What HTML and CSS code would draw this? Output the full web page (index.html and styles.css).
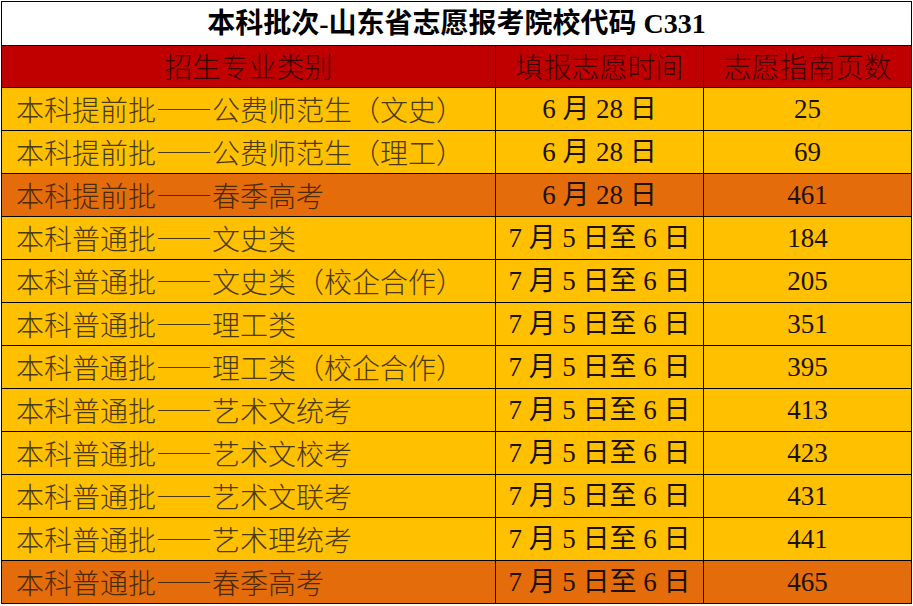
FILE: index.html
```html
<!DOCTYPE html>
<html lang="zh-CN">
<head>
<meta charset="utf-8">
<title>本科批次-山东省志愿报考院校代码 C331</title>
<link rel="stylesheet" href="styles.css">
</head>
<body>
<table class="sheet">
  <colgroup>
    <col class="c1"><col class="c2"><col class="c3">
  </colgroup>
  <tr class="title-row"><td colspan="3">本科批次-山东省志愿报考院校代码 C331</td></tr>
  <tr class="head-row"><td>招生专业类别</td><td>填报志愿时间</td><td>志愿指南页数</td></tr>
  <tr class="row y"><td class="name">本科提前批——公费师范生（文史）</td><td class="date">6 月 28 日</td><td class="num">25</td></tr>
  <tr class="row y"><td class="name">本科提前批——公费师范生（理工）</td><td class="date">6 月 28 日</td><td class="num">69</td></tr>
  <tr class="row o"><td class="name">本科提前批——春季高考</td><td class="date">6 月 28 日</td><td class="num">461</td></tr>
  <tr class="row y"><td class="name">本科普通批——文史类</td><td class="date">7 月 5 日至 6 日</td><td class="num">184</td></tr>
  <tr class="row y"><td class="name">本科普通批——文史类（校企合作）</td><td class="date">7 月 5 日至 6 日</td><td class="num">205</td></tr>
  <tr class="row y"><td class="name">本科普通批——理工类</td><td class="date">7 月 5 日至 6 日</td><td class="num">351</td></tr>
  <tr class="row y"><td class="name">本科普通批——理工类（校企合作）</td><td class="date">7 月 5 日至 6 日</td><td class="num">395</td></tr>
  <tr class="row y"><td class="name">本科普通批——艺术文统考</td><td class="date">7 月 5 日至 6 日</td><td class="num">413</td></tr>
  <tr class="row y"><td class="name">本科普通批——艺术文校考</td><td class="date">7 月 5 日至 6 日</td><td class="num">423</td></tr>
  <tr class="row y"><td class="name">本科普通批——艺术文联考</td><td class="date">7 月 5 日至 6 日</td><td class="num">431</td></tr>
  <tr class="row y"><td class="name">本科普通批——艺术理统考</td><td class="date">7 月 5 日至 6 日</td><td class="num">441</td></tr>
  <tr class="row o"><td class="name">本科普通批——春季高考</td><td class="date">7 月 5 日至 6 日</td><td class="num">465</td></tr>
</table>
</body>
</html>
```
FILE: styles.css
```css
html, body {
  margin: 0;
  padding: 0;
  background: #ffffff;
}
body {
  padding: 1px 0 0 1px;
}
.sheet {
  border-collapse: collapse;
  table-layout: fixed;
  width: 910px;
  font-family: "Noto Sans CJK SC", sans-serif;
}
.c1 { width: 494px; }
.c2 { width: 208px; }
.c3 { width: 208px; }
.sheet td {
  border: 1px solid #000;
  padding: 0;
  white-space: nowrap;
  overflow: hidden;
}
.title-row td {
  height: 43px;
  background: #ffffff;
  text-align: center;
  font-family: "Liberation Serif", "Noto Sans CJK SC", serif;
  font-weight: bold;
  font-size: 28px;
  color: #000;
  line-height: 43px;
}
.head-row td {
  height: 41px;
  background: #c00000;
  text-align: center;
  font-size: 28px;
  font-weight: 300;
  color: #3a0000;
  line-height: 41px;
}
.row td {
  height: 42px;
  line-height: 42px;
  font-size: 27px;
}
.row.y td { background: #ffc000; }
.row.o td { background: #e46c0a; }
.row .name {
  padding-left: 14px;
  font-size: 28px;
  color: #4a3a12;
  font-weight: 300;
  text-align: left;
}
.row.o .name { color: #4a2a08; }
.row .date, .row .num {
  text-align: center;
  font-family: "Liberation Serif", "Noto Sans CJK SC", serif;
  color: #1c1000;
}
```
